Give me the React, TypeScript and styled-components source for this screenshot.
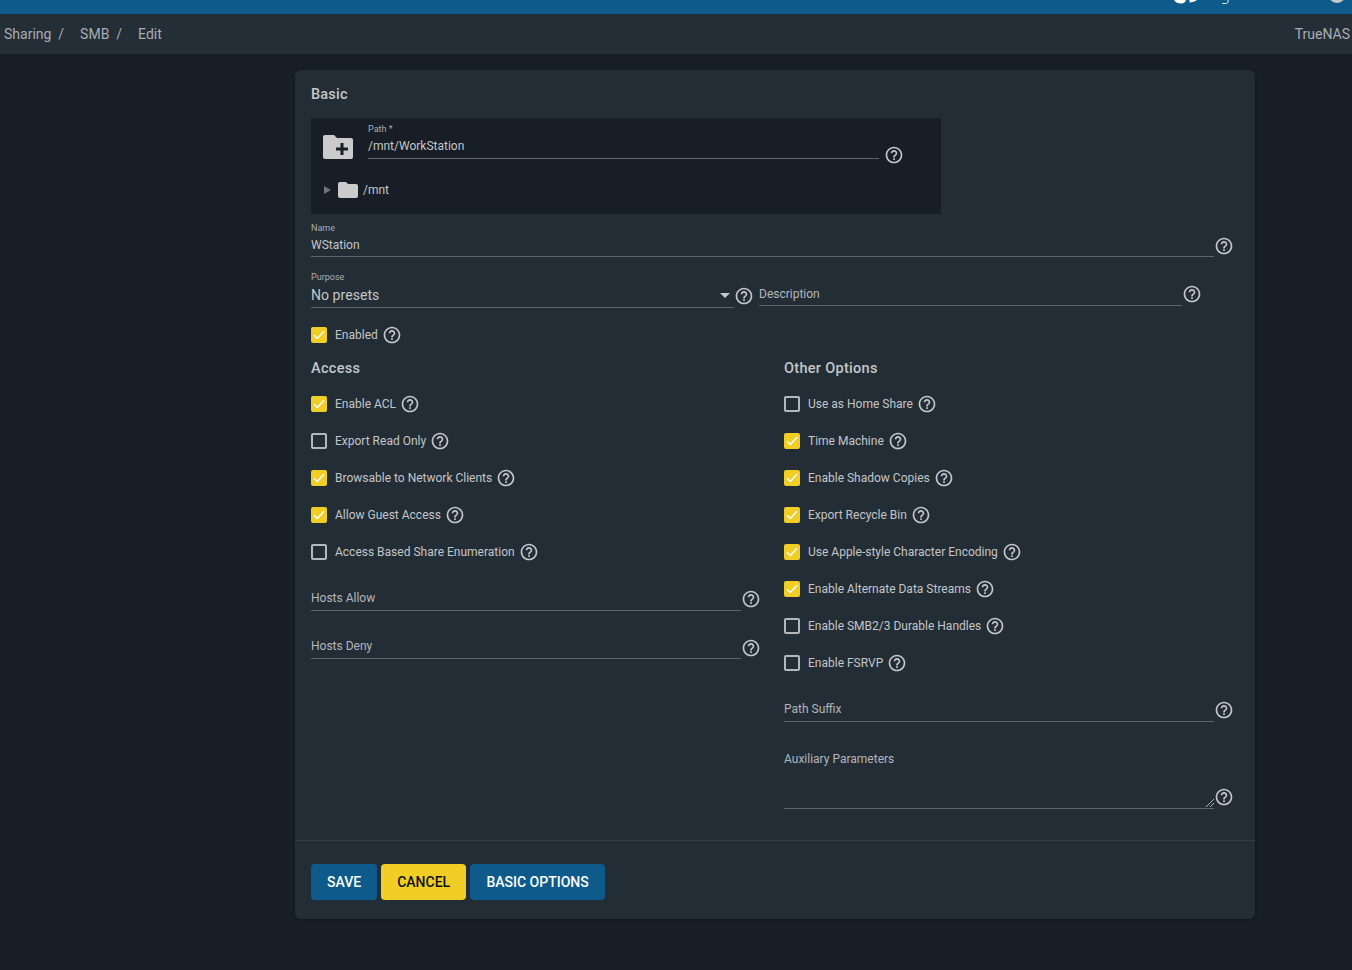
import styled, { createGlobalStyle } from "styled-components";
import { MdHelpOutline } from "react-icons/md";

const GlobalStyle = createGlobalStyle`
    html, body {
        margin: 0;
        padding: 0;
        background: #171e26;
    }
    * {
        box-sizing: border-box;
    }
    #root {
        height: 970px;
        overflow: hidden;
        font-family: Roboto, "Liberation Sans", sans-serif;
        color: #c4c6c8;
    }
`

const TopBar = styled.div`
    height: 14px;
    background: #0d5a8b;
    overflow: hidden;
    display: flex;
    justify-content: flex-end;
`

const TopCloud = styled.svg`
    width: 23px;
    height: 4px;
    margin-right: 24px;
    fill: #fff;
`

const TopHook = styled.svg`
    width: 8px;
    height: 4px;
    margin-right: 99px;
    fill: none;
    stroke: #fff;
    stroke-width: 1;
`

const TopAvatar = styled.div`
    width: 18px;
    height: 18px;
    margin-top: -15px;
    margin-right: 6px;
    border-radius: 50%;
    background: #c9c9c9;
`

const CrumbBar = styled.div`
    height: 40px;
    padding: 0 2px 0 4px;
    background: #242e37;
    display: flex;
    align-items: center;
    justify-content: space-between;
    font-size: 14px;
    color: #a9adb1;
`

const Crumbs = styled.div`
    display: flex;
    align-items: center;
`

const Crumb = styled.span`
    margin-right: 16px;
`

const Card = styled.main`
    width: 960px;
    height: 849px;
    margin: 16px 0 0 295px;
    background: #232d36;
    border-radius: 6px;
    box-shadow: 0 1px 3px rgba(0, 0, 0, .3);
    display: flex;
    flex-direction: column;
`

const FormArea = styled.div`
    flex: 1;
    padding: 0 21px 0 16px;
    border-bottom: 1px solid #333d46;
`

const SectionTitle = styled.h2`
    margin: 0;
    font-size: 14.5px;
    font-weight: 500;
    line-height: 50px;
    height: 48px;
    letter-spacing: .2px;
    color: #c4c6c8;
`

const Explorer = styled.div`
    width: 630px;
    height: 96px;
    background: #171e26;
    padding: 5px 12px 0;
`

const PathRow = styled.div`
    display: flex;
    align-items: flex-end;
`

const FolderAdd = styled.svg`
    width: 30px;
    height: 24px;
    margin: 12px 15px 0 0;
    align-self: flex-start;
    flex-shrink: 0;
    fill: #cbcbcb;
`

const PathField = styled.div`
    width: 511px;
    border-bottom: 1px solid #5b656d;
    padding-bottom: 5px;
`

const TinyLabel = styled.div`
    font-size: 9px;
    line-height: 12px;
    color: #a9adb1;
`

const ValueText = styled.div<{ $large?: boolean }>`
    font-size: ${(p) => (p.$large ? "14px" : "12px")};
    line-height: ${(p) => (p.$large ? "16px" : "14px")};
    margin-top: 4px;
    letter-spacing: ${(p) => (p.$large ? ".05px" : "0")};
`

const TreeRow = styled.div`
    display: flex;
    align-items: center;
    margin-top: 23px;
    padding-left: 1px;
    font-size: 12px;
`

const TreeArrow = styled.span`
    width: 0;
    height: 0;
    border-left: 7px solid #6f7376;
    border-top: 4px solid transparent;
    border-bottom: 4px solid transparent;
    margin-right: 7px;
`

const TreeFolder = styled.svg`
    width: 20px;
    height: 16px;
    margin-right: 5px;
    fill: #cbcbcb;
`

const FieldRow = styled.div<{ $mt?: number }>`
    display: flex;
    align-items: flex-end;
    margin-top: ${(p) => p.$mt ?? 0}px;
`

const Field = styled.div<{ $height?: number; $tight?: boolean }>`
    flex: 1;
    min-width: 0;
    height: ${(p) => (p.$height ? `${p.$height}px` : "auto")};
    border-bottom: 1px solid #5b656d;
    padding-bottom: ${(p) => (p.$tight ? "4px" : "5px")};
    position: relative;
`

const Placeholder = styled.div`
    font-size: 12px;
    line-height: 14px;
    color: #b3b6b9;
`

const AuxLabel = styled(Placeholder)`
    padding-top: 3px;
`

const Grip = styled.svg`
    position: absolute;
    right: 0;
    bottom: 1px;
    width: 8px;
    height: 8px;
    stroke: #b5b5b5;
    stroke-width: 1;
`

const Caret = styled.span`
    position: absolute;
    right: 4px;
    bottom: 9px;
    width: 0;
    height: 0;
    border-top: 5px solid #c4c6c8;
    border-left: 5px solid transparent;
    border-right: 5px solid transparent;
`

const Help = styled(MdHelpOutline) <{ $shift?: boolean; $lift?: boolean }>`
    width: 20px;
    height: 20px;
    flex-shrink: 0;
    color: #c4c6c8;
    margin-bottom: ${(p) => (p.$shift ? "-6px" : p.$lift ? "2.5px" : "1.5px")};
    margin-left: ${(p) => (p.$shift ? "5px" : "0")};
`

const TwoUp = styled.div`
    display: grid;
    grid-template-columns: 443px 443px;
    column-gap: 5px;
    align-items: end;
    margin-top: 14px;
`

const DescriptionWrap = styled.div`
    margin-bottom: 2px;
`

const CheckRow = styled.label<{ $single?: boolean }>`
    height: ${(p) => (p.$single ? "20px" : "37px")};
    display: flex;
    align-items: center;
    font-size: 12px;
`

const Box = styled.span<{ $on?: boolean }>`
    width: 16px;
    height: 16px;
    margin-right: 8px;
    border-radius: 2px;
    flex-shrink: 0;
    background: ${(p) => (p.$on ? "#f0ce26" : "transparent")};
    border: ${(p) => (p.$on ? "none" : "2px solid #b5b8ba")};
    display: flex;
    align-items: center;
    justify-content: center;
`

const CheckMark = styled.svg`
    width: 12px;
    height: 10px;
    fill: none;
    stroke: #fff;
    stroke-width: 1.5;
`

const CheckHelp = styled(MdHelpOutline)`
    width: 20px;
    height: 20px;
    margin-left: 4px;
    color: #c4c6c8;
`

const Columns = styled.div`
    display: grid;
    grid-template-columns: 450px 450px;
    column-gap: 23px;
`

const EnabledWrap = styled.div`
    margin-top: 17px;
`

const ColumnTitle = styled(SectionTitle)`
    line-height: 20px;
    height: 20px;
    margin: 14px 0 6px;
    letter-spacing: .3px;
`

const Footer = styled.footer`
    height: 78px;
    padding: 23px 16px 0;
    display: flex;
    gap: 4px;
    align-items: flex-start;
`

const Button = styled.button<{ $accent?: boolean; $minWidth?: number }>`
    height: 36px;
    min-width: ${(p) => p.$minWidth ?? 0}px;
    padding: 0 16px;
    border: none;
    border-radius: 4px;
    font-family: inherit;
    font-size: 14px;
    font-weight: 500;
    background: ${(p) => (p.$accent ? "#f0ce26" : "#0d5a8b")};
    color: ${(p) => (p.$accent ? "#111" : "#fff")};
`

type CheckProps = { label: string; on?: boolean; single?: boolean };

const Check = ({ label, on, single }: CheckProps) => (
    <CheckRow $single={single}>
        <Box $on={on}>
            {on && (
                <CheckMark viewBox="0 0 12 10">
                    <path d="M1 5.2 4.3 8.5 11 1.2" />
                </CheckMark>
            )}
        </Box>
        {label}
        <CheckHelp />
    </CheckRow>
);

const access: CheckProps[] = [
    { label: "Enable ACL", on: true },
    { label: "Export Read Only" },
    { label: "Browsable to Network Clients", on: true },
    { label: "Allow Guest Access", on: true },
    { label: "Access Based Share Enumeration" },
];

const other: CheckProps[] = [
    { label: "Use as Home Share" },
    { label: "Time Machine", on: true },
    { label: "Enable Shadow Copies", on: true },
    { label: "Export Recycle Bin", on: true },
    { label: "Use Apple-style Character Encoding", on: true },
    { label: "Enable Alternate Data Streams", on: true },
    { label: "Enable SMB2/3 Durable Handles" },
    { label: "Enable FSRVP" },
];

export default function App() {
    return (
        <>
            <GlobalStyle />
            <TopBar>
                <TopCloud viewBox="0 0 23 4">
                    <path d="M0 0h12c-.5 2-2 3.5-5 3.5S1.500 2.500 0 0zM15 0h8c-2 1.500-5 2.500-8 2.500 1-.7 1-1.500 0-2.500z" />
                </TopCloud>
                <TopHook viewBox="0 0 8 4">
                    <path d="M7 0v1.500C7 3 6 3.500 4.500 3.500H1.500" />
                </TopHook>
                <TopAvatar />
            </TopBar>
            <CrumbBar>
                <Crumbs>
                    <Crumb>Sharing&nbsp; /</Crumb>
                    <Crumb>SMB&nbsp; /</Crumb>
                    <Crumb>Edit</Crumb>
                </Crumbs>
                <span>TrueNAS</span>
            </CrumbBar>
            <Card>
                <FormArea>
                    <SectionTitle>Basic</SectionTitle>
                    <Explorer>
                        <PathRow>
                            <FolderAdd viewBox="0 0 30 24">
                                <path
                                    fillRule="evenodd"
                                    d="M2 0h9l3 3h14a2 2 0 0 1 2 2v17a2 2 0 0 1-2 2H2a2 2 0 0 1-2-2V2a2 2 0 0 1 2-2zm15.500 8v4.500H13v3h4.500V20h3v-4.500H25v-3h-4.500V8z"
                                />
                            </FolderAdd>
                            <PathField>
                                <TinyLabel>Path *</TinyLabel>
                                <ValueText>/mnt/WorkStation</ValueText>
                            </PathField>
                            <Help $shift />
                        </PathRow>
                        <TreeRow>
                            <TreeArrow />
                            <TreeFolder viewBox="0 0 20 16">
                                <path d="M2 0h6l2 2h8a2 2 0 0 1 2 2v10a2 2 0 0 1-2 2H2a2 2 0 0 1-2-2V2a2 2 0 0 1 2-2z" />
                            </TreeFolder>
                            /mnt
                        </TreeRow>
                    </Explorer>
                    <FieldRow $mt={8}>
                        <Field $tight>
                            <TinyLabel>Name</TinyLabel>
                            <ValueText>WStation</ValueText>
                        </Field>
                        <Help />
                    </FieldRow>
                    <TwoUp>
                        <FieldRow>
                            <Field $tight>
                                <TinyLabel>Purpose</TinyLabel>
                                <ValueText $large>No presets</ValueText>
                                <Caret />
                            </Field>
                            <Help $lift />
                        </FieldRow>
                        <DescriptionWrap>
                            <FieldRow>
                                <Field $tight>
                                    <Placeholder>Description</Placeholder>
                                </Field>
                                <Help $lift />
                            </FieldRow>
                        </DescriptionWrap>
                    </TwoUp>
                    <EnabledWrap>
                        <Check label="Enabled" on single />
                    </EnabledWrap>
                    <Columns>
                        <div>
                            <ColumnTitle>Access</ColumnTitle>
                            {access.map((c) => (
                                <Check key={c.label} {...c} />
                            ))}
                            <FieldRow $mt={19}>
                                <Field>
                                    <Placeholder>Hosts Allow</Placeholder>
                                </Field>
                                <Help />
                            </FieldRow>
                            <FieldRow $mt={27}>
                                <Field>
                                    <Placeholder>Hosts Deny</Placeholder>
                                </Field>
                                <Help />
                            </FieldRow>
                        </div>
                        <div>
                            <ColumnTitle>Other Options</ColumnTitle>
                            {other.map((c) => (
                                <Check key={c.label} {...c} />
                            ))}
                            <FieldRow $mt={19}>
                                <Field>
                                    <Placeholder>Path Suffix</Placeholder>
                                </Field>
                                <Help />
                            </FieldRow>
                            <FieldRow $mt={27}>
                                <Field $height={60}>
                                    <AuxLabel>Auxiliary Parameters</AuxLabel>
                                    <Grip viewBox="0 0 8 8">
                                        <path d="M0 8 8 0M4 8 8 4" />
                                    </Grip>
                                </Field>
                                <Help />
                            </FieldRow>
                        </div>
                    </Columns>
                </FormArea>
                <Footer>
                    <Button>SAVE</Button>
                    <Button $accent>CANCEL</Button>
                    <Button $minWidth={135}>BASIC OPTIONS</Button>
                </Footer>
            </Card>
        </>
    );
}
